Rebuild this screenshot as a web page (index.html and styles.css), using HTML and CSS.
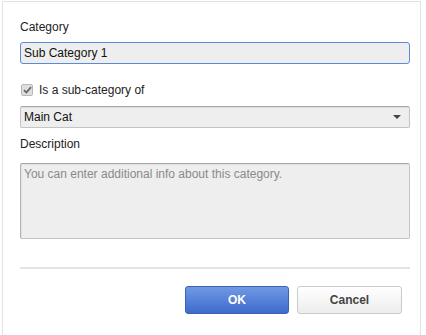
FILE: index.html
```html
<!DOCTYPE html>
<html lang="en">
<head>
    <meta charset="UTF-8">
    <meta name="viewport" content="width=device-width, initial-scale=1.0">
    <title>Edit category</title>
    <link rel="stylesheet" href="styles.css">
</head>
<body>
    <div class="dialog">
        <div class="form">
            <label class="fieldLabel" for="catName">Category</label>
            <input type="text" id="catName" class="textInput" value="Sub Category 1">

            <label class="checkRow">
                <span class="checkBox">
                    <svg width="9" height="8" viewBox="0 0 9 8"><path d="M1 4.2 L3.4 6.5 L8 1.2" fill="none" stroke="#666" stroke-width="1.8"/></svg>
                </span>
                Is a sub-category of
            </label>

            <div class="selectWrap">
                <select class="selectBox">
                    <option>Main Cat</option>
                </select>
                <svg class="selectArrow" width="8" height="4" viewBox="0 0 8 4"><path d="M0 0 H8 L4 4 Z" fill="#444"/></svg>
            </div>

            <label class="fieldLabel descLabel" for="catDesc">Description</label>
            <textarea id="catDesc" class="textArea" placeholder="You can enter additional info about this category."></textarea>
        </div>

        <div class="divider"></div>

        <div class="buttons">
            <button type="button" class="btn okBtn">OK</button>
            <button type="button" class="btn cancelBtn">Cancel</button>
        </div>
    </div>
</body>
</html>
```

FILE: styles.css
```css
*{
    box-sizing: border-box;
}
body{
    margin: 0;
    font-family: "Liberation Sans", Arial, sans-serif;
    font-size: 12px;
    color: #222;
    background-color: white;
    overflow: hidden;
}
.dialog{
    margin: 1px 0 0 2px;
    width: 419px;
    height: 345px;
    border: 1px solid #e2e2e2;
    border-bottom: none;
    padding: 18px 10px 0 17px;
}
.form{
    display: flex;
    flex-direction: column;
}
.fieldLabel{
    display: block;
    line-height: 14px;
}
.textInput{
    margin-top: 8px;
    height: 22px;
    padding: 0 3px;
    border: 1px solid #5b8ad8;
    border-radius: 3px;
    background-color: #eeeeee;
    font-family: inherit;
    font-size: 12px;
    color: #111;
    outline: none;
}
.checkRow{
    margin-top: 19px;
    display: flex;
    align-items: center;
    gap: 6px;
    line-height: 14px;
    padding-left: 1px;
}
.checkBox{
    width: 12px;
    height: 12px;
    border: 1px solid #b8b8b8;
    border-radius: 2px;
    background-color: #dedede;
    display: flex;
    align-items: center;
    justify-content: center;
}
.selectWrap{
    margin-top: 9px;
    position: relative;
}
.selectBox{
    display: block;
    width: 100%;
    height: 22px;
    padding: 0 3px;
    -webkit-appearance: none;
    appearance: none;
    border: 1px solid #c4c4c4;
    border-top-color: #a8a8a8;
    border-radius: 2px;
    background-color: #eeeeee;
    box-shadow: inset 0 1px 1px rgba(0, 0, 0, 0.08);
    font-family: inherit;
    font-size: 12px;
    color: #111;
    outline: none;
}
.selectArrow{
    position: absolute;
    right: 9px;
    top: 9px;
}
.descLabel{
    margin-top: 9px;
}
.textArea{
    margin-top: 12px;
    height: 76px;
    padding: 3px 3px;
    resize: none;
    border: 1px solid #c4c4c4;
    border-top-color: #a8a8a8;
    border-left-color: #b4b4b4;
    border-radius: 2px;
    background-color: #eeeeee;
    box-shadow: inset 1px 1px 1px rgba(0, 0, 0, 0.06);
    font-family: inherit;
    font-size: 12px;
    line-height: 14px;
    outline: none;
}
.textArea::placeholder{
    color: #8a8a8a;
}
.divider{
    margin-top: 28px;
    height: 2px;
    background-color: #e4e4e4;
}
.buttons{
    margin-top: 17px;
    display: flex;
    justify-content: flex-end;
    gap: 8px;
    padding-right: 8px;
}
.btn{
    height: 28px;
    border-radius: 3px;
    font-family: inherit;
    font-size: 12px;
    font-weight: bold;
}
.okBtn{
    width: 104px;
    color: white;
    border: 1px solid #3a62b4;
    background: linear-gradient(#7099e4, #3e6acd);
}
.cancelBtn{
    width: 105px;
    color: #444;
    border: 1px solid #cacaca;
    background: linear-gradient(#ffffff, #ededed);
}
```
